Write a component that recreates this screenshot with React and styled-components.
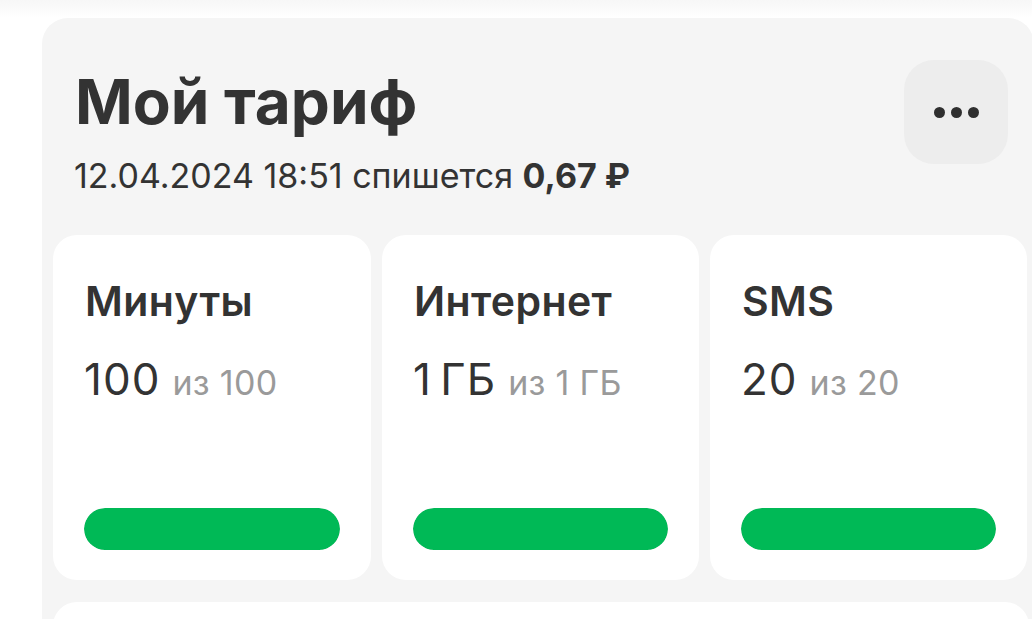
import React from "react";
import styled, { createGlobalStyle } from "styled-components";

const Global = createGlobalStyle`
  html, body {
    margin: 0;
    padding: 0;
    background: #ffffff;
    overflow: hidden;
  }
  body {
    font-family: Inter, "Noto Sans", Roboto, sans-serif;
    color: #333333;
  }
`;

const Page = styled.div`
  width: 1032px;
  height: 619px;
  overflow: hidden;
  display: flex;
  flex-direction: column;
`;

const TopShade = styled.div`
  height: 18px;
  flex: none;
  background: linear-gradient(to bottom, #f7f7f7 0%, #fbfbfb 55%, #ffffff 100%);
`;

const TariffCard = styled.section`
  margin-left: 42px;
  width: 992px;
  flex: none;
  background: #f5f5f5;
  border-radius: 26px;
  padding: 42px 0 0 11px;
  box-sizing: border-box;
`;

const Header = styled.div`
  display: flex;
  justify-content: space-between;
  align-items: flex-start;
  padding: 0 26px 0 23px;
`;

const HeaderText = styled.div`
  display: flex;
  flex-direction: column;
`;

const Title = styled.h1`
  margin: 6px 0 0 -1px;
  font-size: 62px;
  line-height: 72px;
  font-weight: 700;
  letter-spacing: 0;
  color: #333333;
`;

const Subtitle = styled.div`
  margin-top: 18px;
  margin-left: -2px;
  font-size: 34px;
  line-height: 40px;
  font-weight: 400;
  color: #333333;
`;

const Amount = styled.b`
  font-weight: 700;
`;

const MenuButton = styled.button`
  width: 104px;
  height: 104px;
  border: none;
  border-radius: 30px;
  background: #ededed;
  display: flex;
  align-items: center;
  justify-content: center;
  gap: 6px;
  padding: 0;
  cursor: pointer;
`;

const Dot = styled.span`
  width: 11px;
  height: 11px;
  border-radius: 50%;
  background: #2f2f2f;
`;

const Grid = styled.div`
  margin-top: 39px;
  display: grid;
  grid-template-columns: 318px 317px 317px;
  column-gap: 11px;
`;

const Counter = styled.div`
  height: 345px;
  box-sizing: border-box;
  background: #ffffff;
  border-radius: 24px;
  padding: 43px 31px 30px;
  display: flex;
  flex-direction: column;
`;

const CounterTitle = styled.div`
  font-size: 41px;
  line-height: 46px;
  font-weight: 600;
  letter-spacing: 0.4px;
  color: #333333;
  padding-left: 1px;
`;

const CounterValue = styled.div`
  margin-top: 29px;
  font-size: 44px;
  line-height: 53px;
  font-weight: 400;
  letter-spacing: 1px;
  word-spacing: -5px;
  color: #333333;
  white-space: nowrap;
`;

const Of = styled.span`
  font-size: 34px;
  letter-spacing: 0.3px;
  word-spacing: 0;
  color: #9a9a9a;
  margin-left: 12px;
`;

const Track = styled.div`
  margin-top: auto;
  height: 42px;
  border-radius: 21px;
  background: #e6e6e6;
  overflow: hidden;
`;

const Fill = styled.div`
  height: 100%;
  border-radius: 21px;
  background: #00b956;
`;

const NextBlock = styled.div`
  margin-top: 22px;
  width: 976px;
  height: 120px;
  background: #ffffff;
  border-radius: 24px;
`;

const counters = [
  { title: "Минуты", value: "100", total: "из 100", pct: 100 },
  { title: "Интернет", value: "1 ГБ", total: "из 1 ГБ", pct: 100 },
  { title: "SMS", value: "20", total: "из 20", pct: 100 },
];

export default function App() {
  return (
    <Page>
      <Global />
      <TopShade />
      <TariffCard>
        <Header>
          <HeaderText>
            <Title>Мой тариф</Title>
            <Subtitle>
              12.04.2024 18:51 спишется <Amount>0,67 ₽</Amount>
            </Subtitle>
          </HeaderText>
          <MenuButton aria-label="Ещё">
            <Dot />
            <Dot />
            <Dot />
          </MenuButton>
        </Header>
        <Grid>
          {counters.map((c) => (
            <Counter key={c.title}>
              <CounterTitle>{c.title}</CounterTitle>
              <CounterValue>
                {c.value}
                <Of>{c.total}</Of>
              </CounterValue>
              <Track>
                <Fill style={{ width: `${c.pct}%` }} />
              </Track>
            </Counter>
          ))}
        </Grid>
        <NextBlock />
      </TariffCard>
    </Page>
  );
}
